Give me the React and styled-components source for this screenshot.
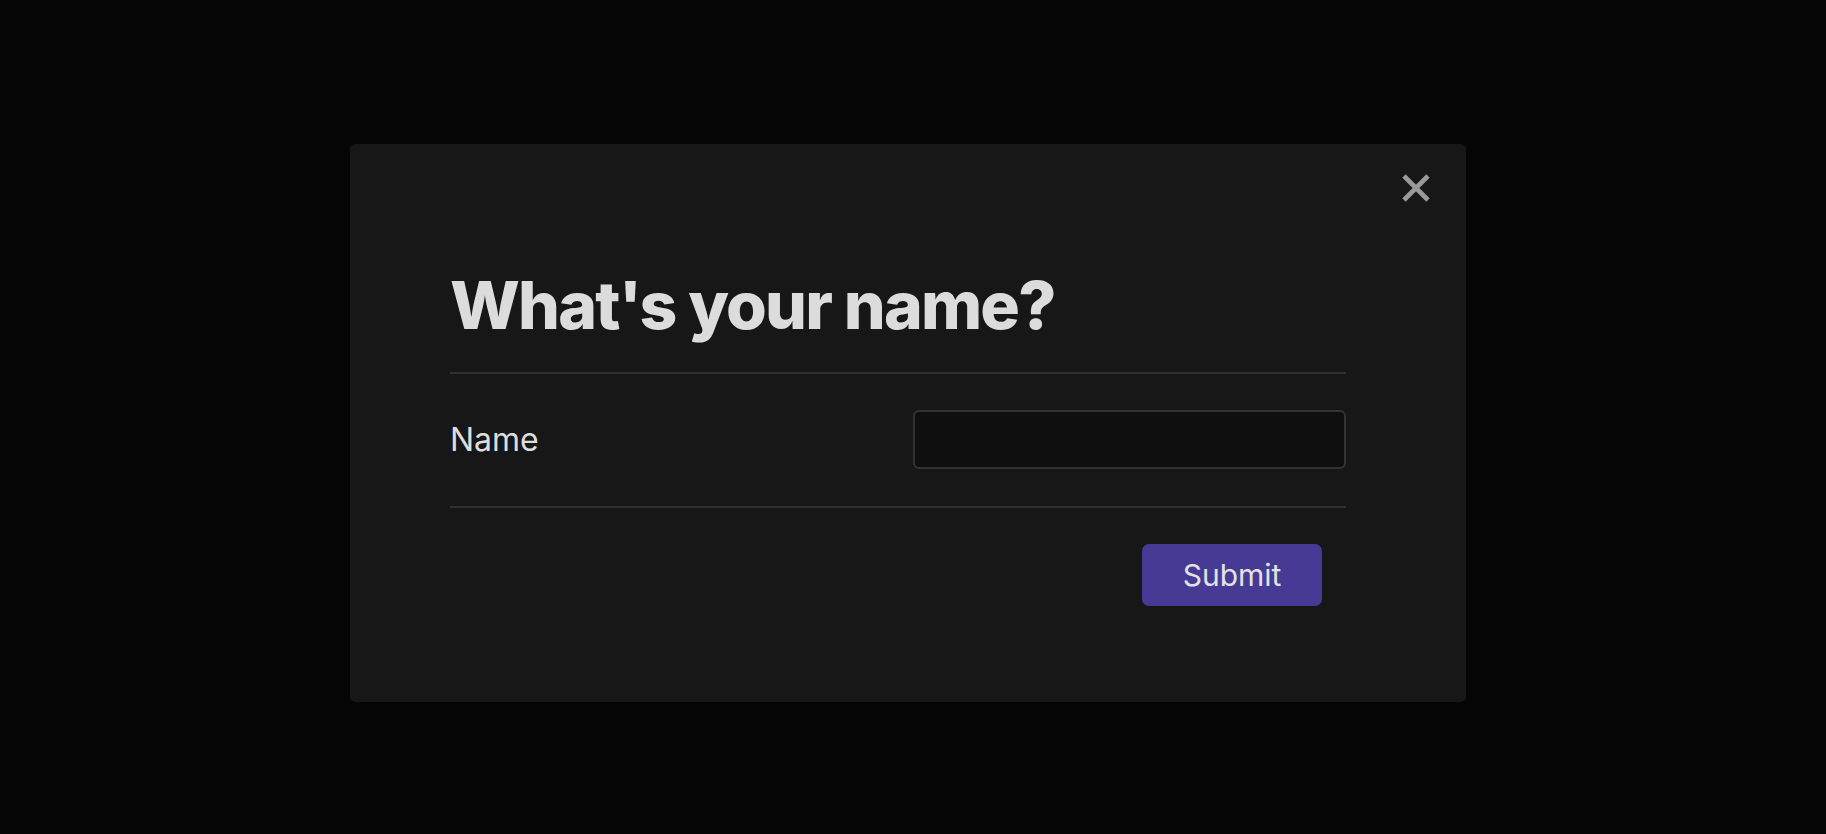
import styled, { createGlobalStyle } from "styled-components";

const GlobalStyle = createGlobalStyle`
  html, body {
    margin: 0;
    padding: 0;
    background: #050505;
    font-family: Inter, "Noto Sans", sans-serif;
  }
`;

const Backdrop = styled.div`
  width: 100vw;
  height: 100vh;
  box-sizing: border-box;
  padding: 144px 0 0 350px;
  background: #050505;
`;

const Modal = styled.div`
  position: relative;
  width: 1116px;
  height: 558px;
  box-sizing: border-box;
  padding: 121px 120px 96px 100px;
  background: #171717;
  border-radius: 5px;
  display: flex;
  flex-direction: column;
`;

const Close = styled.button`
  position: absolute;
  top: 30px;
  right: 36px;
  width: 28px;
  height: 28px;
  padding: 0;
  border: none;
  background: transparent;
  cursor: pointer;
  display: flex;
`;

const Title = styled.h1`
  margin: 0 0 27px;
  font-size: 66px;
  line-height: 80px;
  font-weight: 800;
  letter-spacing: -1.8px;
  color: #dcdcdc;
`;

const Row = styled.div`
  display: flex;
  align-items: center;
  justify-content: space-between;
  padding: 36px 0 37px;
  border-top: 2px solid #2f2f2f;
  border-bottom: 2px solid #2f2f2f;
`;

const Label = styled.label`
  font-size: 32px;
  color: #dedede;
`;

const Input = styled.input`
  width: 433px;
  height: 59px;
  box-sizing: border-box;
  background: #0f0f0f;
  border: 2px solid #333;
  border-radius: 6px;
  color: #ddd;
  font: inherit;
  font-size: 28px;
  padding: 0 14px;
  outline: none;
`;

const Footer = styled.div`
  display: flex;
  justify-content: flex-end;
  padding: 36px 24px 0 0;
`;

const Button = styled.button`
  width: 180px;
  height: 62px;
  border: none;
  border-radius: 7px;
  background: #473a94;
  color: #e2e2e2;
  font-family: Inter, sans-serif;
  font-size: 30px;
  cursor: pointer;
`;

const App = () => {
  return (
    <>
      <GlobalStyle />
      <Backdrop>
        <Modal>
          <Close aria-label="Close">
            <svg width="28" height="28" viewBox="0 0 28 28">
              <path
                d="M2 2 L26 26 M26 2 L2 26"
                stroke="#9a9a9a"
                strokeWidth="4.6"
                fill="none"
              />
            </svg>
          </Close>
          <Title>What's your name?</Title>
          <Row>
            <Label htmlFor="name">Name</Label>
            <Input id="name" type="text" />
          </Row>
          <Footer>
            <Button>Submit</Button>
          </Footer>
        </Modal>
      </Backdrop>
    </>
  );
};

export default App;
